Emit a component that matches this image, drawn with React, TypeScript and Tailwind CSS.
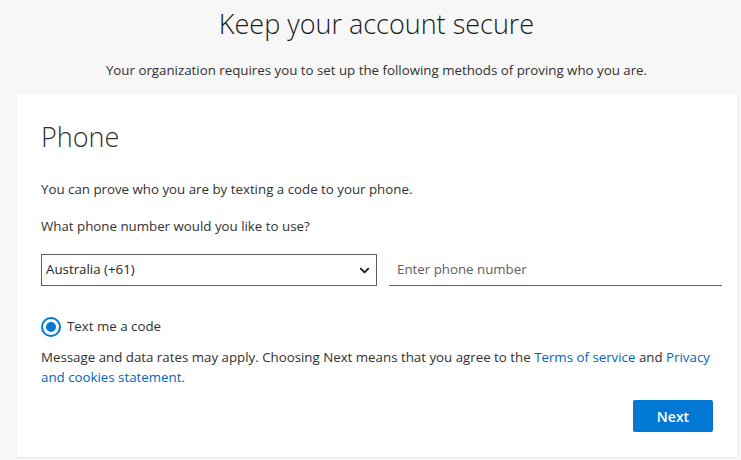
import { ChevronDown } from "lucide-react";

const font = { fontFamily: '"Open Sans", "Noto Sans", sans-serif' };

export default function App() {
  return (
    <div
      className="min-h-[460px] w-full bg-[#f7f7f7] text-[#323130] flex flex-col overflow-hidden"
      style={font}
    >
      <div className="flex flex-col items-center pl-[12px]">
        <h1 className="mt-[6px] text-[27px] font-light leading-[36px] text-[#1b1b1b]">
          Keep your account secure
        </h1>
        <p className="mt-[18px] text-[13.3px] leading-[20px] text-[#323130]">
          Your organization requires you to set up the following methods of proving who you are.
        </p>
      </div>

      <div className="mt-[14px] ml-[17px] mr-[4px] bg-white shadow-[0_1px_2px_rgba(0,0,0,0.08)] pl-[24px] pr-[15px] pt-[25px] pb-[25px]">
        <h2 className="text-[27px] font-light leading-[36px] text-[#323130]">Phone</h2>

        <p className="mt-[24px] text-[13.3px] leading-[20px]">
          You can prove who you are by texting a code to your phone.
        </p>
        <p className="mt-[17px] text-[13.3px] leading-[20px]">
          What phone number would you like to use?
        </p>

        <div className="mt-[18px] flex items-end gap-[12px]">
          <div className="relative w-[336px] h-[32px] border border-[#605e5c] flex items-center px-[4px]">
            <span className="text-[13.3px] text-[#201f1e]">Australia (+61)</span>
            <ChevronDown
              className="absolute right-[4px] top-[8px] w-[15px] h-[15px] text-[#201f1e]"
              strokeWidth={3}
            />
          </div>
          <div className="flex-1 h-[32px] border-b border-[#605e5c] flex items-center px-[8px]">
            <span className="text-[13.3px] text-[#605e5c]">Enter phone number</span>
          </div>
        </div>

        <div className="mt-[31px] flex items-center gap-[6px]">
          <span className="w-[20px] h-[20px] rounded-full border-2 border-[#0078d4] flex items-center justify-center">
            <span className="w-[10px] h-[10px] rounded-full bg-[#0078d4]" />
          </span>
          <span className="text-[13.3px]">Text me a code</span>
        </div>

        <p className="mt-[10px] text-[13.3px] leading-[20px]">
          Message and data rates may apply. Choosing Next means that you agree to the{" "}
          <a className="text-[#0067b8]">Terms of service</a> and{" "}
          <a className="text-[#0067b8]">Privacy and cookies statement.</a>
        </p>

        <div className="mt-[13px] flex justify-end pr-[9px]">
          <button className="w-[80px] h-[32px] bg-[#0078d4] text-white text-[14px] font-semibold rounded-[2px]">
            Next
          </button>
        </div>
      </div>
    </div>
  );
}
